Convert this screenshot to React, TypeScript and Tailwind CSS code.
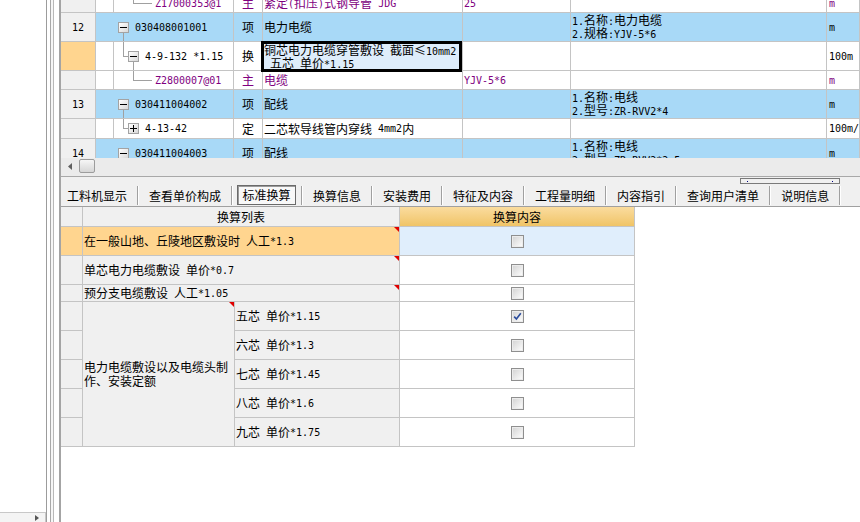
import React from "react";

function T({ s }: { s: string }) {
  const parts = s.split(/([\x20-\x7e]+)/).filter((p) => p !== "");
  return (
    <>
      {parts.map((p, i) =>
        /^[\x20-\x7e]+$/.test(p) ? (
          <span key={i} className="whitespace-pre font-['DejaVu_Sans_Mono',monospace] text-[10px]">
            {p}
          </span>
        ) : (
          <span key={i}>{p}</span>
        )
      )}
    </>
  );
}

function Box({ plus = false }: { plus?: boolean }) {
  return (
    <span className="relative block h-[11px] w-[11px] border border-[#a3a3a3] bg-gradient-to-br from-white to-[#d8d8d8]">
      <span className="absolute left-[1px] top-[4px] h-px w-[7px] bg-black" />
      {plus && <span className="absolute left-[4px] top-[1px] h-[7px] w-px bg-black" />}
    </span>
  );
}

function Check({ on = false }: { on?: boolean }) {
  return (
    <span className="flex h-[13px] w-[13px] items-center justify-center border border-[#8f8f8f] bg-white">
      <span className="flex h-[11px] w-[11px] items-center justify-center border border-[#ececec] bg-gradient-to-br from-[#d6d6d6] to-[#fbfbfb]">
        {on && (
          <svg width="9" height="9" viewBox="0 0 9 9">
            <path d="M1.2 4.6 L3.4 7 L7.8 1.2" stroke="#2b4c9c" strokeWidth="1.6" fill="none" />
          </svg>
        )}
      </span>
    </span>
  );
}

function Red() {
  return (
    <span className="absolute right-0 top-0 h-0 w-0 border-l-[5px] border-t-[5px] border-l-transparent border-t-[#e00000]" />
  );
}

const cell =
  "flex shrink-0 items-center overflow-hidden whitespace-nowrap border-b border-r border-[#c4c4c4]";
const BLUE = "bg-[#a8d9f7]";
const LN = "absolute bg-[#a0a0a0]";

function Tab({ t }: { t: string }) {
  return <div className="flex h-[19px] items-center px-[10px]">{t}</div>;
}
function Sep() {
  return <div className="h-[19px] w-[2px] shrink-0 border-l border-r border-l-[#a0a0a0] border-r-white" />;
}

export default function App() {
  return (
    <div className="flex h-[522px] w-[860px] overflow-hidden bg-white font-['Noto_Sans_CJK_SC',sans-serif] text-[12px] text-black">
      {/* left panel */}
      <div className="flex w-[46px] shrink-0 flex-col justify-end bg-white">
        <div className="flex h-[10px] items-center justify-end border-r border-t border-[#c8c8c8] bg-[#f4f4f4] pr-[6px]">
          <svg width="4" height="6" viewBox="0 0 4 6">
            <path d="M0 0L4 3L0 6Z" fill="#555" />
          </svg>
        </div>
      </div>
      {/* splitter strip */}
      <div className="flex w-[13px] shrink-0">
        <div className="w-px bg-[#9c9c9c]" />
        <div className="w-[3px] bg-white" />
        <div className="w-px bg-[#a8a8a8]" />
        <div className="w-[2px] bg-[#f6f6f6]" />
        <div className="w-px bg-[#b8b8b8]" />
        <div className="w-[5px] bg-white" />
      </div>
      {/* main */}
      <div className="flex min-w-0 flex-1 flex-col border-l-2 border-[#a4a4a4]">
        {/* top grid */}
        <div className="h-[158px] shrink-0 overflow-hidden">
          <div className="-mt-[6px] flex flex-col">
            {/* row 0 partial */}
            <div className="flex h-[19px]">
              <div className={`${cell} w-[35px] bg-[#f0f0f0]`} />
              <div className={`${cell} w-[18px] bg-white`} />
              <div className={`${cell} relative w-[120px] pl-[41px] text-[#800080]`}>
                <span className={`${LN} left-[19px] top-0 h-[9px] w-px`} />
                <span className={`${LN} left-[19px] top-[9px] h-px w-[19px]`} />
                <T s="Z17000353@1" />
              </div>
              <div className={`${cell} w-[29px] justify-center text-[#800080]`}>主</div>
              <div className={`${cell} w-[200px] pl-[1px] text-[#800080]`}>
                <T s="紧定(扣压)式钢导管 JDG" />
              </div>
              <div className={`${cell} w-[108px] pl-[1px] text-[#800080]`}>
                <T s="25" />
              </div>
              <div className={`${cell} w-[256px]`} />
              <div className={`${cell} flex-1 pl-[2px] text-[#800080]`}>
                <T s="m" />
              </div>
            </div>
            {/* row 12 */}
            <div className="flex h-[29px]">
              <div className={`${cell} w-[35px] justify-center bg-[#f0f0f0]`}>
                <T s="12" />
              </div>
              <div className={`w-[18px] shrink-0 border-b border-[#c4c4c4] ${BLUE}`} />
              <div className={`${cell} relative w-[120px] pl-[21px] ${BLUE}`}>
                <span className="absolute left-[4px] top-[9px]">
                  <Box />
                </span>
                <span className={`${LN} bottom-0 left-[9px] top-[20px] w-px`} />
                <T s="030408001001" />
              </div>
              <div className={`${cell} w-[29px] justify-center ${BLUE}`}>项</div>
              <div className={`${cell} w-[200px] pl-[1px] ${BLUE}`}>电力电缆</div>
              <div className={`${cell} w-[108px] ${BLUE}`} />
              <div className={`${cell} w-[256px] pl-[1px] ${BLUE}`}>
                <div className="flex flex-col leading-[11px]">
                  <span>
                    <T s="1.名称:电力电缆" />
                  </span>
                  <span>
                    <T s="2.规格:YJV-5*6" />
                  </span>
                </div>
              </div>
              <div className={`${cell} flex-1 pl-[2px] ${BLUE}`}>
                <T s="m" />
              </div>
            </div>
            {/* row 4-9-132 */}
            <div className="flex h-[29px]">
              <div className={`${cell} w-[35px] bg-[#ffd58f]`} />
              <div className={`${cell} w-[18px] bg-white`} />
              <div className={`${cell} relative w-[120px] pl-[31px]`}>
                <span className={`${LN} left-[9px] top-0 h-[14px] w-px`} />
                <span className={`${LN} left-[9px] top-[14px] h-px w-[5px]`} />
                <span className="absolute left-[14px] top-[9px]">
                  <Box />
                </span>
                <span className={`${LN} bottom-0 left-[19px] top-[20px] w-px`} />
                <T s="4-9-132 *1.15" />
              </div>
              <div className={`${cell} w-[29px] justify-center`}>换</div>
              <div className={`${cell} relative w-[200px] overflow-visible`}>
                <div className="absolute -left-[2px] -top-px bottom-[-2px] right-0 z-10 flex flex-col border-[3px] border-black bg-[#deedfb] leading-[11px]">
                  <span className="whitespace-pre">
                    <T s="铜芯电力电缆穿管敷设 截面≤10mm2" />
                  </span>
                  <span className="whitespace-pre">
                    <T s=" 五芯 单价*1.15" />
                  </span>
                </div>
              </div>
              <div className={`${cell} w-[108px]`} />
              <div className={`${cell} w-[256px]`} />
              <div className={`${cell} flex-1 pl-[2px]`}>
                <T s="100m" />
              </div>
            </div>
            {/* row Z2800007 */}
            <div className="flex h-[19px]">
              <div className={`${cell} w-[35px] bg-[#f0f0f0]`} />
              <div className={`${cell} w-[18px] bg-white`} />
              <div className={`${cell} relative w-[120px] pl-[41px] text-[#800080]`}>
                <span className={`${LN} left-[19px] top-0 h-[9px] w-px`} />
                <span className={`${LN} left-[19px] top-[9px] h-px w-[19px]`} />
                <T s="Z2800007@01" />
              </div>
              <div className={`${cell} w-[29px] justify-center text-[#800080]`}>主</div>
              <div className={`${cell} w-[200px] pl-[1px] text-[#800080]`}>电缆</div>
              <div className={`${cell} w-[108px] pl-[1px] text-[#800080]`}>
                <T s="YJV-5*6" />
              </div>
              <div className={`${cell} w-[256px]`} />
              <div className={`${cell} flex-1 pl-[2px] text-[#800080]`}>
                <T s="m" />
              </div>
            </div>
            {/* row 13 */}
            <div className="flex h-[29px]">
              <div className={`${cell} w-[35px] justify-center bg-[#f0f0f0]`}>
                <T s="13" />
              </div>
              <div className={`w-[18px] shrink-0 border-b border-[#c4c4c4] ${BLUE}`} />
              <div className={`${cell} relative w-[120px] pl-[21px] ${BLUE}`}>
                <span className="absolute left-[4px] top-[9px]">
                  <Box />
                </span>
                <span className={`${LN} bottom-0 left-[9px] top-[20px] w-px`} />
                <T s="030411004002" />
              </div>
              <div className={`${cell} w-[29px] justify-center ${BLUE}`}>项</div>
              <div className={`${cell} w-[200px] pl-[1px] ${BLUE}`}>配线</div>
              <div className={`${cell} w-[108px] ${BLUE}`} />
              <div className={`${cell} w-[256px] pl-[1px] ${BLUE}`}>
                <div className="flex flex-col leading-[11px]">
                  <span>
                    <T s="1.名称:电线" />
                  </span>
                  <span>
                    <T s="2.型号:ZR-RVV2*4" />
                  </span>
                </div>
              </div>
              <div className={`${cell} flex-1 pl-[2px] ${BLUE}`}>
                <T s="m" />
              </div>
            </div>
            {/* row 4-13-42 */}
            <div className="flex h-[20px]">
              <div className={`${cell} w-[35px] bg-[#f0f0f0]`} />
              <div className={`${cell} w-[18px] bg-white`} />
              <div className={`${cell} relative w-[120px] pl-[31px]`}>
                <span className={`${LN} left-[9px] top-0 h-[9px] w-px`} />
                <span className={`${LN} left-[9px] top-[9px] h-px w-[5px]`} />
                <span className="absolute left-[14px] top-[4px]">
                  <Box plus />
                </span>
                <T s="4-13-42" />
              </div>
              <div className={`${cell} w-[29px] justify-center`}>定</div>
              <div className={`${cell} w-[200px] pl-[1px]`}>
                <T s="二芯软导线管内穿线 4mm2内" />
              </div>
              <div className={`${cell} w-[108px]`} />
              <div className={`${cell} w-[256px]`} />
              <div className={`${cell} flex-1 pl-[2px]`}>
                <T s="100m/" />
              </div>
            </div>
            {/* row 14 */}
            <div className="flex h-[29px]">
              <div className={`${cell} w-[35px] justify-center bg-[#f0f0f0]`}>
                <T s="14" />
              </div>
              <div className={`w-[18px] shrink-0 border-b border-[#c4c4c4] ${BLUE}`} />
              <div className={`${cell} relative w-[120px] pl-[21px] ${BLUE}`}>
                <span className="absolute left-[4px] top-[9px]">
                  <Box />
                </span>
                <T s="030411004003" />
              </div>
              <div className={`${cell} w-[29px] justify-center ${BLUE}`}>项</div>
              <div className={`${cell} w-[200px] pl-[1px] ${BLUE}`}>配线</div>
              <div className={`${cell} w-[108px] ${BLUE}`} />
              <div className={`${cell} w-[256px] pl-[1px] ${BLUE}`}>
                <div className="flex flex-col leading-[11px]">
                  <span>
                    <T s="1.名称:电线" />
                  </span>
                  <span>
                    <T s="2.型号:ZR-RVV2*2.5" />
                  </span>
                </div>
              </div>
              <div className={`${cell} flex-1 pl-[2px] ${BLUE}`}>
                <T s="m" />
              </div>
            </div>
          </div>
        </div>
        {/* horizontal scrollbar */}
        <div className="flex h-[18px] shrink-0 items-start bg-[#ebebeb] pt-px">
          <div className="flex h-[14px] w-[18px] items-center justify-center">
            <svg width="4" height="7" viewBox="0 0 4 7">
              <path d="M4 0L0 3.5L4 7Z" fill="#606060" />
            </svg>
          </div>
          <div className="h-[14px] w-[16px] rounded-[2px] border border-[#9c9c9c] bg-gradient-to-b from-[#f6f6f6] to-[#d6d6d6]" />
        </div>
        {/* tab bar */}
        <div className="relative flex h-[31px] shrink-0 items-end border-y border-t-[#a8a8a8] border-b-[#a0a0a0] bg-[#f0f0f0] pb-px">
          <div className="absolute left-[679px] top-px flex h-[6px] w-[100px] items-center justify-between border border-[#7a7a7a] px-[6px]">
            <span className="h-px w-px bg-[#000080]" />
            <span className="h-px w-px bg-[#000080]" />
          </div>
          <div className="flex h-[19px] items-center pl-[6px] pr-[10px]">工料机显示</div>
          <Sep />
          <Tab t="查看单价构成" />
          <Sep />
          <div className="ml-[4px] mr-[5px] flex h-[20px] w-[59px] items-center justify-center border border-[#6a6a6a] bg-[#f8f8f8] shadow-[inset_1px_1px_0_#9a9a9a]">
            标准换算
          </div>
          <Sep />
          <Tab t="换算信息" />
          <Sep />
          <Tab t="安装费用" />
          <Sep />
          <Tab t="特征及内容" />
          <Sep />
          <Tab t="工程量明细" />
          <Sep />
          <Tab t="内容指引" />
          <Sep />
          <Tab t="查询用户清单" />
          <Sep />
          <Tab t="说明信息" />
          <Sep />
        </div>
        {/* lower grid */}
        <div className="flex-1 bg-white">
          <div className="grid w-[574px] grid-cols-[22px_152px_165px_235px] grid-rows-[20px_29px_29px_17px_29px_29px_29px_29px_29px]">
            {/* header */}
            <div className="border-b border-r border-[#c4c4c4] bg-[#f0f0f0]" />
            <div className="col-span-2 flex items-center justify-center border-b border-r border-[#c4c4c4] bg-[#f0f0f0]">
              换算列表
            </div>
            <div className="flex items-center justify-center border-b border-r border-[#c4c4c4] bg-gradient-to-b from-[#fadc9e] to-[#f0c466]">
              换算内容
            </div>
            {/* row 1 */}
            <div className="border-b border-r border-[#c4c4c4] bg-[#ffd58f]" />
            <div className="relative col-span-2 flex items-center whitespace-nowrap border-b border-r border-[#c4c4c4] bg-[#ffd58f] pl-[1px]">
              <T s="在一般山地、丘陵地区敷设时 人工*1.3" />
              <Red />
            </div>
            <div className="flex items-center justify-center border-b border-r border-[#c4c4c4] bg-[#e0eefc]">
              <Check />
            </div>
            {/* row 2 */}
            <div className="border-b border-r border-[#c4c4c4] bg-[#f0f0f0]" />
            <div className="relative col-span-2 flex items-center whitespace-nowrap border-b border-r border-[#c4c4c4] bg-[#f0f0f0] pl-[1px]">
              <T s="单芯电力电缆敷设 单价*0.7" />
              <Red />
            </div>
            <div className="flex items-center justify-center border-b border-r border-[#c4c4c4]">
              <Check />
            </div>
            {/* row 3 */}
            <div className="border-b border-r border-[#c4c4c4] bg-[#f0f0f0]" />
            <div className="relative col-span-2 flex items-center whitespace-nowrap border-b border-r border-[#c4c4c4] bg-[#f0f0f0] pl-[1px]">
              <T s="预分支电缆敷设 人工*1.05" />
              <Red />
            </div>
            <div className="flex items-center justify-center border-b border-r border-[#c4c4c4]">
              <Check />
            </div>
            {/* merged group */}
            <div className="col-start-1 row-start-5 border-b border-r border-[#c4c4c4] bg-[#f0f0f0]" />
            <div className="col-start-1 row-start-6 border-b border-r border-[#c4c4c4] bg-[#f0f0f0]" />
            <div className="col-start-1 row-start-7 border-b border-r border-[#c4c4c4] bg-[#f0f0f0]" />
            <div className="col-start-1 row-start-8 border-b border-r border-[#c4c4c4] bg-[#f0f0f0]" />
            <div className="col-start-1 row-start-9 border-b border-r border-[#c4c4c4] bg-[#f0f0f0]" />
            <div className="relative col-start-2 row-span-5 row-start-5 flex items-center border-b border-r border-[#c4c4c4] bg-[#f0f0f0] pl-[1px] leading-[14px]">
              <span>电力电缆敷设以及电缆头制作、安装定额</span>
              <Red />
            </div>
            {[
              ["五芯 单价*1.15", true],
              ["六芯 单价*1.3", false],
              ["七芯 单价*1.45", false],
              ["八芯 单价*1.6", false],
              ["九芯 单价*1.75", false],
            ].map(([t, on], i) => (
              <React.Fragment key={i}>
                <div className="col-start-3 flex items-center whitespace-nowrap border-b border-r border-[#c4c4c4] bg-[#f0f0f0] pl-[1px]">
                  <T s={t as string} />
                </div>
                <div className="col-start-4 flex items-center justify-center border-b border-r border-[#c4c4c4]">
                  <Check on={on as boolean} />
                </div>
              </React.Fragment>
            ))}
          </div>
        </div>
      </div>
    </div>
  );
}
